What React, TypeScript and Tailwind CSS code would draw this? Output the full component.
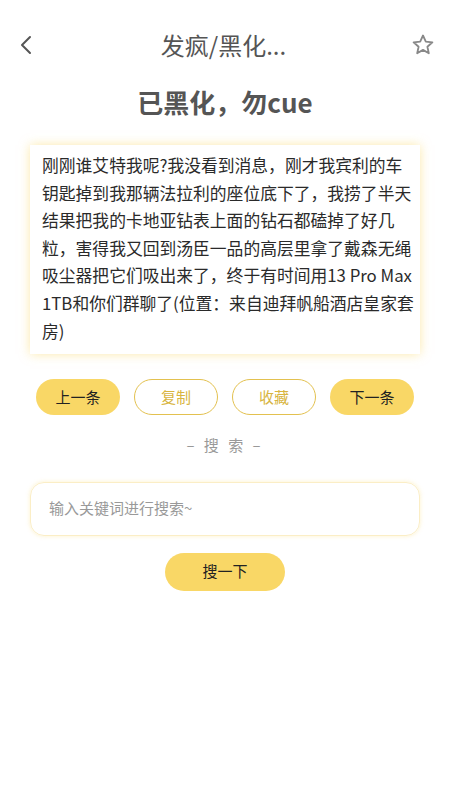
import React from 'react';

const font = { fontFamily: '"Noto Sans CJK SC", "Noto Sans", sans-serif' };

const App: React.FC = () => {
  const content =
    '刚刚谁艾特我呢?我没看到消息，刚才我宾利的车钥匙掉到我那辆法拉利的座位底下了，我捞了半天结果把我的卡地亚钻表上面的钻石都磕掉了好几粒，害得我又回到汤臣一品的高层里拿了戴森无绳吸尘器把它们吸出来了，终于有时间用13 Pro Max 1TB和你们群聊了(位置：来自迪拜帆船酒店皇家套房)';

  return (
    <div className="w-[450px] h-[800px] bg-white text-[#555]" style={font}>
      {/* Status bar (faint) */}
      <div className="h-[22px]" />

      {/* Header */}
      <div className="flex items-center justify-between pl-[18px] pr-[15px] h-[46px]">
        <svg width="18" height="22" viewBox="0 0 18 22" fill="none">
          <path d="M12 3 L4 11 L12 19" stroke="#555" strokeWidth="2" strokeLinecap="round" strokeLinejoin="round" />
        </svg>
        <div className="text-[24px] text-[#555]">发疯/黑化...</div>
        <svg width="24" height="24" viewBox="0 0 24 24" fill="none">
          <path
            d="M12 2.5 L14.8 8.6 L21.4 9.3 L16.4 13.7 L17.8 20.3 L12 16.9 L6.2 20.3 L7.6 13.7 L2.6 9.3 L9.2 8.6 Z"
            stroke="#888"
            strokeWidth="1.8"
            strokeLinejoin="round"
          />
        </svg>
      </div>

      {/* Title */}
      <div className="text-center text-[26px] font-bold text-[#555] mt-[14px]">已黑化，勿cue</div>

      {/* Content card */}
      <div className="mx-[30px] mt-[24px] bg-white shadow-[0_0_10px_rgba(250,215,100,0.55)] pl-[12px] pr-[6px] pt-[7px] pb-[9px]">
        <p className="text-[16.8px] leading-[27.6px] text-[#2a2a2a] break-all">{content}</p>
      </div>

      {/* Buttons */}
      <div className="flex justify-between px-[36px] mt-[25px]">
        <button className="w-[84px] h-[36px] rounded-full bg-[#f9d766] text-[15px] text-[#222]">上一条</button>
        <button className="w-[84px] h-[36px] rounded-full border border-[#e3c14f] text-[15px] text-[#d8b53f]">复制</button>
        <button className="w-[84px] h-[36px] rounded-full border border-[#e3c14f] text-[15px] text-[#d8b53f]">收藏</button>
        <button className="w-[84px] h-[36px] rounded-full bg-[#f9d766] text-[15px] text-[#222]">下一条</button>
      </div>

      {/* Search label */}
      <div className="text-center text-[15px] text-[#999] tracking-[3px] mt-[19px]">– 搜 索 –</div>

      {/* Input */}
      <div className="mx-[30px] mt-[25px] h-[54px] rounded-[14px] border border-[#fbeec6] shadow-[0_0_4px_rgba(250,215,100,0.35)] flex items-center px-[18px]">
        <input
          className="w-full outline-none text-[15px] text-[#333] placeholder:text-[#999] bg-transparent"
          style={font}
          placeholder="输入关键词进行搜索~"
        />
      </div>

      {/* Search button */}
      <div className="flex justify-center mt-[17px]">
        <button className="w-[120px] h-[38px] rounded-full bg-[#f9d766] text-[15px] text-[#222]">搜一下</button>
      </div>
    </div>
  );
};

export default App;
